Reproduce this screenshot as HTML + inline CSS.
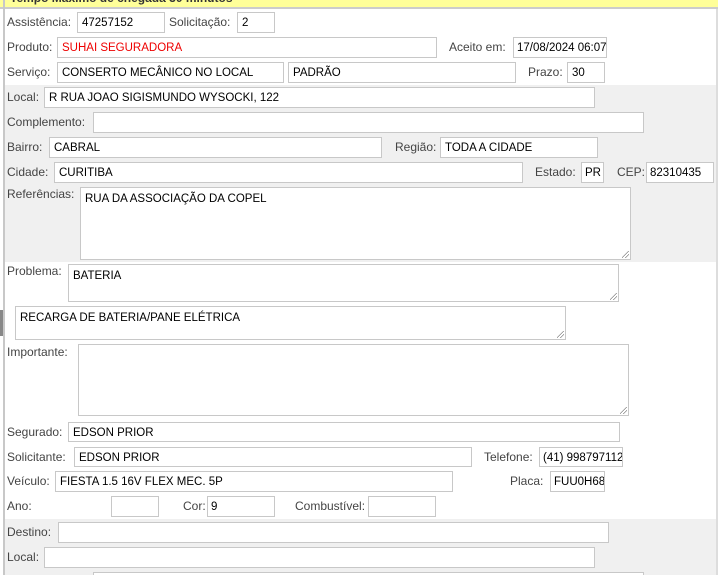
<!DOCTYPE html>
<html><head><meta charset="utf-8"><style>
*{margin:0;padding:0;box-sizing:border-box}
html,body{width:718px;height:575px;overflow:hidden}
body{background:#fff;font-family:"Liberation Sans",sans-serif;font-size:12px;position:relative}
.top{position:absolute;left:0;top:0;width:718px;height:9px;background:#ffff99;border-bottom:2px solid #ccc;overflow:hidden}
.top span{position:absolute;left:10px;top:-9px;font-weight:bold;font-size:12px;color:#333}
.lb{position:absolute;left:3px;top:0;width:2px;height:575px;background:#c8c8c8}
.rb{position:absolute;left:716px;top:9px;width:2px;height:566px;background:#ddd}
.g{position:absolute;left:5px;width:711px;background:#f0f0f0}
.l{position:absolute;color:#444;line-height:14px;white-space:nowrap}
.i{position:absolute;background:#fff;border:1px solid #c8c8c8;color:#000;padding:0 4px;line-height:20px;white-space:nowrap;overflow:hidden;font-size:11.5px}
.t{line-height:14px;padding-top:4px}
.t:after{content:"";position:absolute;right:1px;bottom:1px;width:7px;height:7px;background:linear-gradient(135deg,transparent 45%,#888 45%,#888 52%,transparent 52%,transparent 70%,#888 70%,#888 77%,transparent 77%)}
</style></head><body>
<div class="top"><span>Tempo Máximo de chegada 30 minutos</span></div>
<div class="lb"></div><div class="rb"></div>
<div class="g" style="top:85px;height:177px"></div>
<div class="g" style="top:519px;height:56px"></div>
<div style="position:absolute;left:0;top:310px;width:3px;height:26px;background:#888"></div>

<div class="l" style="left:7px;top:15px">Assistência:</div>
<div class="i" style="left:77px;top:12px;width:88px;height:21px">47257152</div>
<div class="l" style="left:169px;top:15px">Solicitação:</div>
<div class="i" style="left:237px;top:12px;width:38px;height:21px">2</div>

<div class="l" style="left:7px;top:40px">Produto:</div>
<div class="i" style="left:57px;top:37px;width:380px;height:21px;color:#e00">SUHAI SEGURADORA</div>
<div class="l" style="left:449px;top:40px">Aceito em:</div>
<div class="i" style="left:513px;top:37px;width:94px;height:21px;padding:0 3px">17/08/2024 06:07</div>

<div class="l" style="left:7px;top:65px">Serviço:</div>
<div class="i" style="left:57px;top:62px;width:227px;height:21px">CONSERTO MECÂNICO NO LOCAL</div>
<div class="i" style="left:288px;top:62px;width:228px;height:21px">PADRÃO</div>
<div class="l" style="left:528px;top:65px">Prazo:</div>
<div class="i" style="left:567px;top:62px;width:38px;height:21px">30</div>

<div class="l" style="left:7px;top:90px">Local:</div>
<div class="i" style="left:44px;top:87px;width:551px;height:21px">R RUA JOAO SIGISMUNDO WYSOCKI, 122</div>

<div class="l" style="left:7px;top:115px">Complemento:</div>
<div class="i" style="left:93px;top:112px;width:551px;height:21px"></div>

<div class="l" style="left:7px;top:140px">Bairro:</div>
<div class="i" style="left:49px;top:137px;width:333px;height:21px">CABRAL</div>
<div class="l" style="left:395px;top:140px">Região:</div>
<div class="i" style="left:440px;top:137px;width:158px;height:21px">TODA A CIDADE</div>

<div class="l" style="left:7px;top:165px">Cidade:</div>
<div class="i" style="left:54px;top:162px;width:469px;height:21px">CURITIBA</div>
<div class="l" style="left:535px;top:165px">Estado:</div>
<div class="i" style="left:581px;top:162px;width:23px;height:21px;padding:0 3px">PR</div>
<div class="l" style="left:617px;top:165px">CEP:</div>
<div class="i" style="left:646px;top:162px;width:68px;height:21px;padding:0 3px">82310435</div>

<div class="l" style="left:7px;top:187px">Referências:</div>
<div class="i t" style="left:80px;top:187px;width:551px;height:73px">RUA DA ASSOCIAÇÃO DA COPEL</div>

<div class="l" style="left:7px;top:264px">Problema:</div>
<div class="i t" style="left:68px;top:264px;width:551px;height:38px">BATERIA</div>
<div class="i t" style="left:15px;top:306px;width:551px;height:34px">RECARGA DE BATERIA/PANE ELÉTRICA</div>

<div class="l" style="left:7px;top:345px">Importante:</div>
<div class="i t" style="left:78px;top:344px;width:551px;height:72px"></div>

<div class="l" style="left:7px;top:425px">Segurado:</div>
<div class="i" style="left:68px;top:422px;width:552px;height:20px">EDSON PRIOR</div>

<div class="l" style="left:7px;top:450px">Solicitante:</div>
<div class="i" style="left:74px;top:447px;width:398px;height:20px">EDSON PRIOR</div>
<div class="l" style="left:484px;top:450px">Telefone:</div>
<div class="i" style="left:539px;top:447px;width:84px;height:20px;padding:0 3px">(41) 998797112</div>

<div class="l" style="left:7px;top:474px">Veículo:</div>
<div class="i" style="left:55px;top:471px;width:398px;height:21px">FIESTA 1.5 16V FLEX MEC. 5P</div>
<div class="l" style="left:510px;top:474px">Placa:</div>
<div class="i" style="left:550px;top:471px;width:55px;height:21px;padding:0 3px">FUU0H68</div>

<div class="l" style="left:7px;top:499px">Ano:</div>
<div class="i" style="left:111px;top:496px;width:48px;height:21px"></div>
<div class="l" style="left:183px;top:499px">Cor:</div>
<div class="i" style="left:207px;top:496px;width:68px;height:21px;padding:0 3px">9</div>
<div class="l" style="left:295px;top:499px">Combustível:</div>
<div class="i" style="left:368px;top:496px;width:68px;height:21px"></div>

<div class="l" style="left:7px;top:525px">Destino:</div>
<div class="i" style="left:58px;top:522px;width:551px;height:21px"></div>
<div class="l" style="left:7px;top:550px">Local:</div>
<div class="i" style="left:44px;top:547px;width:551px;height:21px"></div>
<div class="i" style="left:93px;top:572px;width:551px;height:3px;border-bottom:none"></div>
</body></html>
